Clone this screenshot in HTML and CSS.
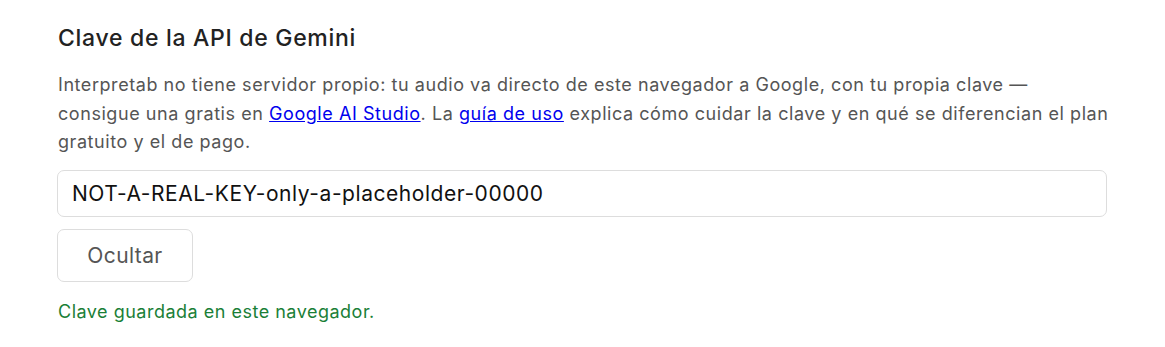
FILE: index.html
```html
<!DOCTYPE html>
<html lang="es">
<head>
  <meta charset="UTF-8">
  <meta name="viewport" content="width=device-width, initial-scale=1.0">
  <title>Clave de la API de Gemini</title>
  <link rel="stylesheet" href="styles.css">
</head>
<body>
  <section class="panel">
    <h2>Clave de la API de Gemini</h2>
    <p class="hint">
      Interpretab no tiene servidor propio: tu audio va directo de este navegador a Google, con tu propia clave —<br>
      consigue una gratis en <a href="#">Google AI Studio</a>. La <a href="#">guía de uso</a> explica cómo cuidar la clave y en qué se diferencian el plan<br>
      gratuito y el de pago.
    </p>
    <input class="key-input" type="text" value="NOT-A-REAL-KEY-only-a-placeholder-00000">
    <button class="btn" type="button">Ocultar</button>
    <p class="status">Clave guardada en este navegador.</p>
  </section>
</body>
</html>
```

FILE: styles.css
```css
/* Estilo general */
body {
  margin: 0;
  font-family: Inter, "Noto Sans", sans-serif;
  color: #222;
  background: #fff;
}

/* Contenedor del panel */
.panel {
  padding: 24px 58px 20px 57px;
  display: flex;
  flex-direction: column;
  align-items: flex-start;
}

h2 {
  margin: 0 0 0 1px;
  font-size: 23px;
  font-weight: 500;
  line-height: 28px;
  letter-spacing: 0.7px;
  color: #222;
}

/* Texto explicativo */
.hint {
  margin: 19px -16px 13px 1px; /* un poco más ancho para que "plan" quepa en la línea */
  font-size: 18px;
  line-height: 28.5px;
  letter-spacing: 0.56px;
  color: #555;
}

.hint a {
  color: #0000ee;
}

/* Campo de la clave */
.key-input {
  box-sizing: border-box;
  width: 100%;
  height: 47px;
  padding: 0 14px;
  font-family: inherit;
  font-size: 21px;
  letter-spacing: 0.55px;
  color: #111;
  border: 1px solid #ddd;
  border-radius: 7px;
  background: #fff;
}

.btn {
  margin-top: 12px;
  width: 136px;
  height: 53px;
  font-family: inherit;
  font-size: 21px;
  letter-spacing: 0.4px;
  color: #555;
  background: #fff;
  border: 1px solid #ddd;
  border-radius: 7px;
}

/* Mensaje de estado */
.status {
  margin: 16px 0 0 1px;
  font-size: 18px;
  line-height: 28px;
  letter-spacing: 0.5px;
  color: #1a7f37;
}
```
